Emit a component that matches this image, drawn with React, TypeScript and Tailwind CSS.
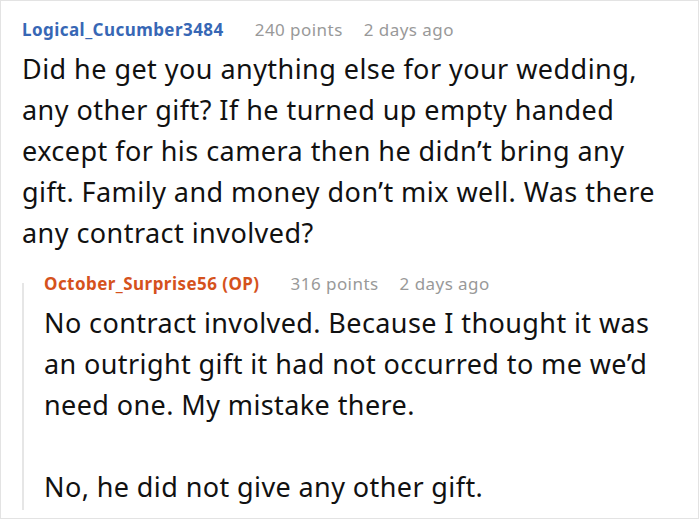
import React from "react";

export default function App() {
  return (
    <div className="w-[699px] h-[519px] bg-white border border-[#e3e3e3] overflow-hidden box-border" style={{ fontFamily: '"Noto Sans", sans-serif' }}>
      <div className="pl-[21px] pt-[17px]">
        <div className="flex items-baseline text-[17px] leading-[24px] tracking-[0.45px]">
          <span className="font-bold text-[#3767b5]">Logical_Cucumber3484</span>
          <span className="ml-[31px] text-[#999999]">240 points</span>
          <span className="ml-[21px] text-[#999999]">2 days ago</span>
        </div>
        <div className="mt-[6px] text-[27px] leading-[41px] tracking-[0.45px] text-[#111111] pr-[30px]">
          Did he get you anything else for your wedding, any other gift? If he turned up empty handed except for his camera then he didn’t bring any gift. Family and money don’t mix well. Was there any contract involved?
        </div>
      </div>
      <div className="ml-[21px] mt-[19px] flex">
        <div className="w-[2px] mt-[11px] h-[227px] bg-[#e6e6e6] shrink-0" />
        <div className="pl-[20px]">
          <div className="flex items-baseline text-[17px] leading-[24px] tracking-[0.45px]">
            <span className="font-bold text-[#d5521c]">October_Surprise56 (OP)</span>
            <span className="ml-[31px] text-[#999999]">316 points</span>
            <span className="ml-[21px] text-[#999999]">2 days ago</span>
          </div>
          <div className="mt-[6px] text-[27px] leading-[41px] tracking-[0.4px] text-[#111111] pr-[30px]">
            <p>No contract involved. Because I thought it was an outright gift it had not occurred to me we’d need one. My mistake there.</p>
            <p className="mt-[41px]">No, he did not give any other gift.</p>
          </div>
        </div>
      </div>
    </div>
  );
}
